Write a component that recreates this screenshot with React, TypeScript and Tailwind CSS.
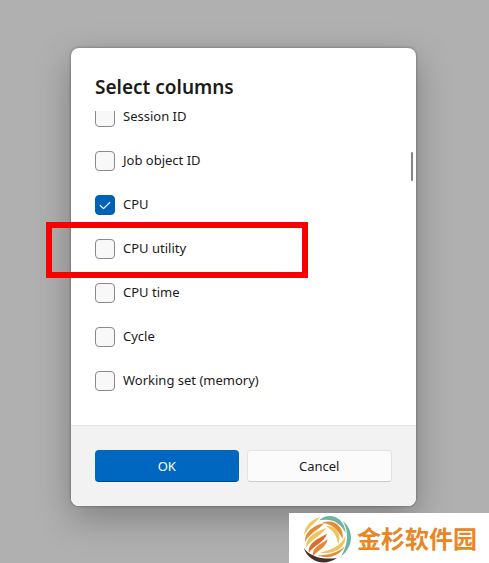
import { useState } from "react";

const columns = [
  { id: "session", label: "Session ID" },
  { id: "job", label: "Job object ID" },
  { id: "cpu", label: "CPU" },
  { id: "cpu-utility", label: "CPU utility", marked: true },
  { id: "cpu-time", label: "CPU time" },
  { id: "cycle", label: "Cycle" },
  { id: "working-set", label: "Working set (memory)" },
];

function ColumnOption({ id, label, marked = false }: { id: string; label: string; marked?: boolean }) {
  const [checked, setChecked] = useState(id === "cpu");
  return (
    <li className="relative flex h-11 items-center gap-2">
      <span className="relative flex size-5 shrink-0">
        <input
          id={id}
          type="checkbox"
          checked={checked}
          onChange={(e) => setChecked(e.target.checked)}
          className="size-5 appearance-none rounded border border-[#8a8a8a] bg-[#f8f8f8] checked:border-[#0062b5] checked:bg-[#0062b5]"
        />
        {checked && (
          <svg viewBox="0 0 20 20" className="pointer-events-none absolute inset-0 size-5" fill="none" stroke="white" strokeWidth="1.2" strokeLinecap="round" strokeLinejoin="round">
            <path d="M5.3 10.5l3.2 3.2 6.2-6.2" />
          </svg>
        )}
      </span>
      <label htmlFor={id} className="pb-0.5 text-[13px] leading-3">
        {label}
      </label>
      {marked && <span className="pointer-events-none absolute -left-[49px] -top-[5px] h-14 w-[262px] border-6 border-[#f70000]" />}
    </li>
  );
}

function SwirlLogo() {
  return (
    <svg viewBox="0 0 180 165" className="h-[55px] w-15 shrink-0" aria-hidden="true">
      <path fill="#f0c45c" d="M70 18C46 24 20 46 22 74C32 50 52 38 70 18Z" />
      <path fill="#e58a35" d="M82 36C52 42 22 62 24 93C36 68 64 58 82 36Z" />
      <path fill="#f0c45c" d="M88 52C58 60 25 78 28 110C40 86 72 76 88 52Z" />
      <path fill="#df6b2a" d="M90 68C66 82 32 94 36 125C48 104 80 96 90 68Z" />
      <path fill="#e58a35" d="M92 84C72 100 44 108 48 136C62 118 88 110 92 84Z" />
      <path fill="#6bb5a2" d="M66 28C94 2 142 16 146 66C126 28 98 22 66 28Z" />
      <path fill="#e58a35" d="M76 35C110 22 142 46 137 84C122 52 104 40 76 35Z" />
      <path fill="#f0c45c" d="M86 46C114 42 136 66 124 100C118 72 108 58 86 46Z" />
      <path fill="#6bb5a2" d="M138 30C170 56 172 108 132 136C154 100 156 62 138 30Z" />
      <path fill="#f0c45c" d="M145 76C148 110 112 132 68 125C104 118 132 104 145 76Z" />
      <path fill="#e58a35" d="M144 106C126 138 90 145 60 133C94 133 122 126 144 106Z" />
      <path fill="#482d29" d="M20 110C40 138 78 147 120 141C82 168 34 152 20 110Z" />
    </svg>
  );
}

export default function App() {
  return (
    <main className="relative min-h-screen overflow-hidden bg-[#b0b0b0] pt-12 pr-[73px] pb-[57px] pl-[71px] font-['Noto_Sans','Open_Sans',sans-serif] text-[#1b1b1b]">
      <section role="dialog" aria-labelledby="title" className="rounded-lg bg-white shadow-[0_12px_36px_rgba(0,0,0,0.28),0_0_3px_rgba(0,0,0,0.4)]">
        <h1 id="title" className="px-6 pt-[26px] pb-[10px] text-[19px] leading-[27px] font-semibold">
          Select columns
        </h1>
        <div className="relative">
          <div className="flex h-[314px] overflow-y-clip pl-6">
            <ul className="-mt-4 flex-1">
              {columns.map((c) => (
                <ColumnOption key={c.id} {...c} />
              ))}
            </ul>
          </div>
          <span className="absolute top-[41px] right-[3px] h-[29px] w-0.5 rounded-full bg-[#858585]" />
        </div>
        <footer className="flex gap-2 rounded-b-lg border-t border-[#e3e3e3] bg-[#f2f2f2] p-6 text-[13px] leading-5">
          <button className="h-8 flex-1 rounded border-b border-[#00498a] bg-[#0067c0] text-white">OK</button>
          <button className="h-8 flex-1 rounded border border-[#e3e3e3] border-b-[#cccccc] bg-[#fbfbfb]">Cancel</button>
        </footer>
      </section>
      <aside className="absolute right-0 bottom-0 flex h-[50px] w-[200px] items-center bg-white pl-2">
        <SwirlLogo />
        <span lang="zh" className="font-['Noto_Sans_CJK_SC',sans-serif] text-[24px] leading-8 font-bold whitespace-nowrap text-[#e88624]">
          金杉软件园
        </span>
      </aside>
    </main>
  );
}
